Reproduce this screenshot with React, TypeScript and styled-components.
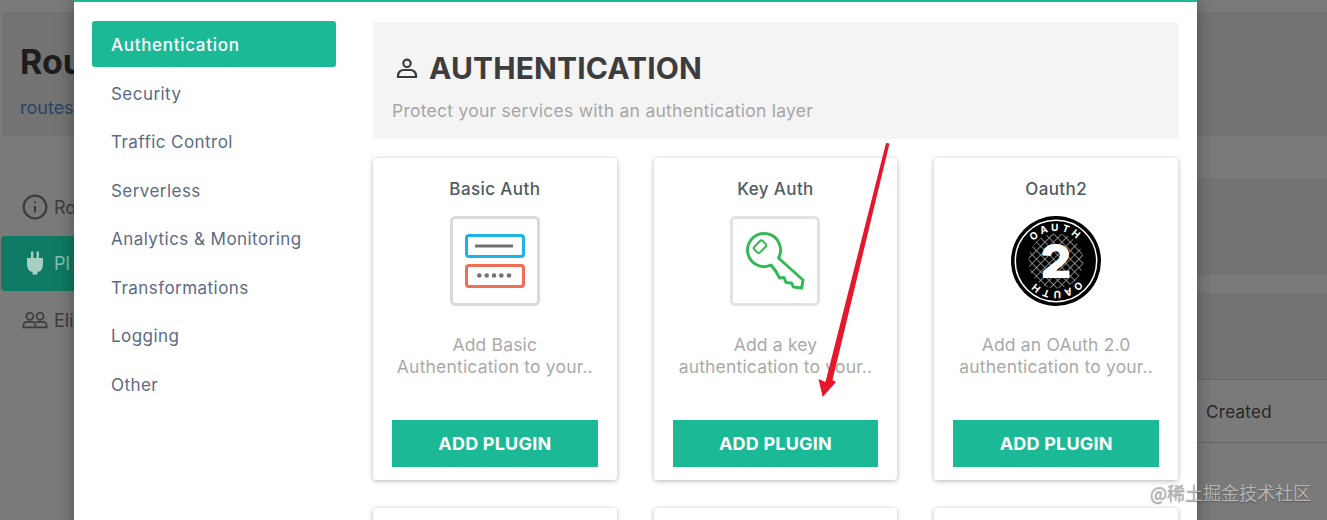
import React from "react";
import styled, { createGlobalStyle } from "styled-components";

const TEAL = "#1bb996";

const Global = createGlobalStyle`
  html, body { margin: 0; padding: 0; background: #7a7a7a; }
  body { font-family: "Inter", "Noto Sans", sans-serif; }
  * { box-sizing: border-box; }
`;

const Stage = styled.div`
  position: relative;
  width: 1327px;
  height: 520px;
  overflow: hidden;
  background: #7a7a7a;
`;

const Page = styled.div`
  display: flex;
  flex-direction: column;
  padding-top: 12px;
  height: 100%;
`;

const PageHeader = styled.div`
  height: 124px;
  margin-left: 2px;
  padding: 30px 18px;
  background: #737373;
`;

const PageTitle = styled.div`
  font-size: 34px;
  line-height: 40px;
  font-weight: 700;
  color: #1d1d1d;
`;

const PageSub = styled.div`
  margin-top: 16px;
  font-size: 18px;
  line-height: 20px;
  color: #2a4364;
`;

const PageBody = styled.div`
  flex: 1;
`;

const SideNav = styled.div`
  display: flex;
  flex-direction: column;
  padding-top: 42px;
  width: 74px;
  overflow: hidden;
`;

const SideItem = styled.div<{ $active?: boolean }>`
  display: flex;
  align-items: center;
  gap: 6px;
  width: 200px;
  height: ${(p) => (p.$active ? "55px" : "58px")};
  padding-left: 21px;
  margin-left: 1px;
  border-radius: 4px;
  font-size: 18px;
  color: ${(p) => (p.$active ? "#7fc2b2" : "#3c3c3c")};
  background: ${(p) => (p.$active ? "#0f7a63" : "transparent")};
`;

const TableHead = styled.div`
  position: absolute;
  right: 0;
  top: 379px;
  width: 130px;
  height: 64px;
  display: flex;
  align-items: center;
  padding: 2px 0 0 9px;
  font-size: 17px;
  letter-spacing: 0.3px;
  color: #262626;
  border-top: 1px solid #666;
  border-bottom: 1px solid #666;
`;

const Band = styled.div<{ $top: number; $height: number }>`
  position: absolute;
  right: 0;
  width: 130px;
  top: ${(p) => p.$top}px;
  height: ${(p) => p.$height}px;
  background: #737373;
`;

const Modal = styled.div`
  position: absolute;
  left: 74px;
  top: 0;
  width: 1123px;
  height: 560px;
  background: #fff;
  border-top: 2px solid ${TEAL};
  box-shadow: 0 0 16px rgba(0, 0, 0, 0.35);
  display: grid;
  grid-template-columns: 244px 805px;
  column-gap: 37px;
  padding: 19px 19px 0 18px;
`;

const Nav = styled.nav`
  display: flex;
  flex-direction: column;
  gap: 2.5px;
`;

const NavItem = styled.div<{ $active?: boolean }>`
  height: 46px;
  display: flex;
  align-items: center;
  padding: 2px 0 0 19px;
  font-size: 17px;
  border-radius: 3px;
  letter-spacing: ${(p) => (p.$active ? "0.7px" : "0.45px")};
  color: ${(p) => (p.$active ? "#fff" : "#5b6b85")};
  background: ${(p) => (p.$active ? TEAL : "transparent")};
  font-weight: ${(p) => (p.$active ? 500 : 400)};
`;

const Main = styled.main`
  display: flex;
  flex-direction: column;
  gap: 19px;
  padding-top: 1px;
`;

const Section = styled.header`
  height: 117px;
  background: #f4f4f4;
  border-radius: 3px;
  padding: 27px 19px 0;
`;

const SectionTitle = styled.h2`
  margin: 0;
  display: flex;
  align-items: center;
  gap: 11px;
  height: 38px;
  font-size: 30px;
  font-weight: 700;
  color: #3d3d3d;
  letter-spacing: 0.12px;
`;

const SectionSub = styled.p`
  margin: 13px 0 0;
  font-size: 17.5px;
  line-height: 22px;
  letter-spacing: 0.26px;
  color: #a6a6a6;
`;

const Cards = styled.div`
  display: grid;
  grid-template-columns: repeat(3, 243.67px);
  grid-auto-rows: 322px;
  column-gap: 37px;
  row-gap: 28px;
`;

const Card = styled.article`
  background: #fff;
  border-radius: 3px;
  box-shadow: 0 1px 5px rgba(0, 0, 0, 0.3);
  padding: 20px 19px 13px;
  display: flex;
  flex-direction: column;
  align-items: center;
`;

const CardTitle = styled.div`
  font-size: 17px;
  line-height: 22px;
  font-weight: 500;
  letter-spacing: 0.4px;
  color: #4f5b63;
  text-align: center;
`;

const IconBox = styled.div`
  margin-top: 16px;
  width: 90px;
  height: 90px;
  flex: none;
`;

const CardText = styled.p`
  margin: 28px 0 0;
  width: 100%;
  height: 54px;
  font-size: 17.5px;
  line-height: 22px;
  letter-spacing: 0.18px;
  color: #a9a9a9;
  text-align: center;
`;

const AddButton = styled.button`
  margin-top: auto;
  width: 100%;
  height: 47px;
  flex: none;
  border: 0;
  background: ${TEAL};
  color: #fff;
  font-family: inherit;
  font-size: 18px;
  font-weight: 700;
  letter-spacing: 0.2px;
`;

const Arrow = styled.svg`
  position: absolute;
  left: 800px;
  top: 130px;
  pointer-events: none;
`;

const Watermark = styled.div`
  position: absolute;
  left: 1150px;
  top: 481px;
  font-family: "Noto Sans CJK SC", "Inter", sans-serif;
  font-size: 18px;
  line-height: 22px;
  color: rgba(185, 185, 185, 0.95);
  text-shadow: 0 1px 1px rgba(60, 60, 60, 0.5);
`;

const BasicIcon = () => (
  <svg width="90" height="90" viewBox="0 0 90 90">
    <rect x="1.5" y="1.5" width="87" height="87" rx="4" fill="#fff" stroke="#d9d9d9" strokeWidth="3" />
    <rect x="16.5" y="19.5" width="57" height="21" rx="2.5" fill="#fff" stroke="#1cb3e6" strokeWidth="3" />
    <line x1="25" y1="30" x2="63" y2="30" stroke="#6f7376" strokeWidth="3" />
    <rect x="16.5" y="49.5" width="57" height="21" rx="2.5" fill="#fff" stroke="#ee6e58" strokeWidth="3" />
    {[29.3, 36.7, 44, 51.3, 59].map((x) => (
      <circle key={x} cx={x} cy="59.5" r="2.3" fill="#6f7376" />
    ))}
  </svg>
);

const KeyIcon = () => (
  <svg width="90" height="90" viewBox="0 0 90 90">
    <rect x="1.5" y="1.5" width="87" height="87" rx="4" fill="#fff" stroke="#e2e2e2" strokeWidth="3" />
    <path
      d="M48.5 42 L73 64 L71.7 72 L63.5 71 L61.5 67 L56 66.5 L54 61.5 L49.5 62 L46 55.5 L41 49 A16.5 16.5 0 1 1 48.5 42 Z"
      fill="none"
      stroke="#35b956"
      strokeWidth="3"
      strokeLinejoin="round"
    />
    <rect x="-6" y="-4" width="12" height="8" rx="2" transform="translate(30 30.7) rotate(-45)" fill="none" stroke="#35b956" strokeWidth="2" />
  </svg>
);

const OauthIcon = () => (
  <svg width="90" height="90" viewBox="0 0 90 90">
    <defs>
      <pattern id="mesh" width="6" height="6" patternUnits="userSpaceOnUse" patternTransform="rotate(45)">
        <rect width="6" height="6" fill="#000" />
        <path d="M0 0H6M0 0V6" stroke="#a8a8a8" strokeWidth="1.5" />
      </pattern>
      <path id="topArc" d="M15 45 A30 30 0 0 1 75 45" />
      <path id="botArc" d="M75 45 A30 30 0 0 1 15 45" />
    </defs>
    <circle cx="45" cy="45" r="45" fill="#000" />
    <circle cx="45" cy="45" r="40.7" fill="none" stroke="#fff" strokeWidth="1.5" />
    <circle cx="45" cy="45" r="27.5" fill="url(#mesh)" />
    <text fontFamily="Inter, sans-serif" fontSize="10" fontWeight="700" fill="#fff" letterSpacing="3" textAnchor="middle">
      <textPath href="#topArc" startOffset="50%">OAUTH</textPath>
    </text>
    <text fontFamily="Inter, sans-serif" fontSize="10" fontWeight="700" fill="#fff" letterSpacing="3" textAnchor="middle">
      <textPath href="#botArc" startOffset="50%">OAUTH</textPath>
    </text>
    <text x="45" y="62" fontFamily="Inter, sans-serif" fontSize="47" fontWeight="900" fill="#fff" textAnchor="middle">2</text>
  </svg>
);

const navItems = ["Authentication", "Security", "Traffic Control", "Serverless", "Analytics & Monitoring", "Transformations", "Logging", "Other"];

const cards = [
  { title: "Basic Auth", icon: <BasicIcon />, text: ["Add Basic", "Authentication to your.."] },
  { title: "Key Auth", icon: <KeyIcon />, text: ["Add a key", "authentication to your.."] },
  { title: "Oauth2", icon: <OauthIcon />, text: ["Add an OAuth 2.0", "authentication to your.."] },
];

export default function App() {
  return (
    <Stage>
      <Global />
      <Page>
        <PageHeader>
          <PageTitle>Rou</PageTitle>
          <PageSub>routes</PageSub>
        </PageHeader>
        <PageBody>
          <SideNav>
            <SideItem>
              <svg width="26" height="26" viewBox="0 0 24 24" fill="none" stroke="#3c3c3c" strokeWidth="2">
                <circle cx="12" cy="12" r="10.5" />
                <path d="M12 11v6M12 7v1.5" />
              </svg>
              Ro
            </SideItem>
            <SideItem $active>
              <svg width="26" height="26" viewBox="0 0 26 26" fill="#a6cfc4">
                <path d="M5 7H9V0.5h2.4V7h3.2V0.5H17V7h4v6q0 7-5.5 8v2.5h-5V21Q5 20 5 13Z" />
              </svg>
              Pl
            </SideItem>
            <SideItem>
              <svg width="26" height="18" viewBox="0 0 28 18" fill="none" stroke="#3c3c3c" strokeWidth="1.8">
                <circle cx="8.5" cy="5" r="3.8" />
                <circle cx="19.5" cy="5" r="3.8" />
                <path d="M1.5 17v-2a4 4 0 0 1 4-4h6a3.5 3.5 0 0 1 3 4v2zM15 11h7.500a4 4 0 0 1 4 4v2h-12" />
              </svg>
              Eli
            </SideItem>
          </SideNav>
        </PageBody>
      </Page>
      <Band $top={178} $height={97} />
      <Band $top={293} $height={86} />
      <TableHead>Created</TableHead>
      <Modal>
        <Nav>
          {navItems.map((n, i) => (
            <NavItem key={n} $active={i === 0}>{n}</NavItem>
          ))}
        </Nav>
        <Main>
          <Section>
            <SectionTitle>
              <svg width="26" height="26" viewBox="0 0 26 26" fill="none" stroke="#3d3d3d" strokeWidth="2.2">
                <circle cx="15" cy="8.300" r="3.700" />
                <path d="M6 22v-1.500a5.500 5.500 0 0 1 5.500-5.500h7a5.500 5.500 0 0 1 5.500 5.500V22Z" />
              </svg>
              AUTHENTICATION
            </SectionTitle>
            <SectionSub>Protect your services with an authentication layer</SectionSub>
          </Section>
          <Cards>
            {cards.map((c) => (
              <Card key={c.title}>
                <CardTitle>{c.title}</CardTitle>
                <IconBox>{c.icon}</IconBox>
                <CardText>
                  {c.text[0]}
                  <br />
                  {c.text[1]}
                </CardText>
                <AddButton>ADD PLUGIN</AddButton>
              </Card>
            ))}
            <Card />
            <Card />
            <Card />
          </Cards>
        </Main>
      </Modal>
      <Arrow width="100" height="270" viewBox="0 0 100 270">
        <path d="M86 13 L89.500 13.500 L32.500 250 L36 252 L22.700 267 L18.500 249 L25.500 252 Z" fill="#e6162c" />
      </Arrow>
      <Watermark>@稀土掘金技术社区</Watermark>
    </Stage>
  );
}
